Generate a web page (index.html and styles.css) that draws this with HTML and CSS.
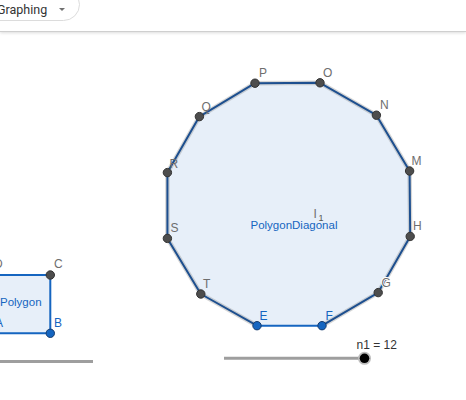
FILE: index.html
```html
<!DOCTYPE html>
<html>
<head>
<meta charset="utf-8">
<link rel="stylesheet" href="styles.css">
</head>
<body>
<div class="app">
  <header class="topbar">
    <div class="app-pill">
      <span class="app-name">Graphing</span>
      <span class="caret"></span>
    </div>
  </header>
  <svg class="canvas" width="466" height="368" viewBox="0 32 466 368">
    <!-- small polygon -->
    <rect class="poly-fill" x="-20" y="275" width="70.3" height="58.3"/>
    <polyline class="edge-bright" points="-20,275 50.3,275 50.3,333.3 -20,333.3"/>
    <circle class="pt-gray" cx="50.3" cy="275" r="4.2"/>
    <circle class="pt-blue" cx="50.3" cy="333.3" r="4.2"/>
    <text class="lbl" x="-6" y="268">D</text>
    <text class="lbl" x="54" y="268">C</text>
    <text class="lbl blue" x="-5" y="327">A</text>
    <text class="lbl blue" x="54" y="327">B</text>
    <text class="cap" x="0" y="306">Polygon</text>

    <!-- left slider -->
    <line class="slider" x1="-10" y1="361.5" x2="93" y2="361.5"/>

    <!-- regular 12-gon -->
    <polygon class="poly-fill" points="255,83.2 320,82.8 376.4,115.2 409.6,171 410.2,236.4 378.2,292.6 322,325.7 257,325.7 200.8,294 167.4,238.4 167.4,172.6 199.4,116.6"/>
    <polyline class="halo" points="257,325.7 200.8,294 167.4,238.4 167.4,172.6 199.4,116.6 255,83.2 320,82.8 376.4,115.2 409.6,171 410.2,236.4 378.2,292.6 322,325.7"/>
    <polyline class="edge-dark" points="257,325.7 200.8,294 167.4,238.4 167.4,172.6 199.4,116.6 255,83.2 320,82.8 376.4,115.2 409.6,171 410.2,236.4 378.2,292.6 322,325.7"/>
    <line class="edge-bright" x1="257" y1="325.7" x2="322" y2="325.7"/>

    <circle class="pt-gray" cx="255" cy="83.2" r="4.2"/>
    <circle class="pt-gray" cx="320" cy="82.8" r="4.2"/>
    <circle class="pt-gray" cx="376.4" cy="115.2" r="4.2"/>
    <circle class="pt-gray" cx="409.6" cy="171" r="4.2"/>
    <circle class="pt-gray" cx="410.2" cy="236.4" r="4.2"/>
    <circle class="pt-gray" cx="378.2" cy="292.6" r="4.2"/>
    <circle class="pt-blue" cx="322" cy="325.7" r="4.2"/>
    <circle class="pt-blue" cx="257" cy="325.7" r="4.2"/>
    <circle class="pt-gray" cx="200.8" cy="294" r="4.2"/>
    <circle class="pt-gray" cx="167.4" cy="238.4" r="4.2"/>
    <circle class="pt-gray" cx="167.4" cy="172.6" r="4.2"/>
    <circle class="pt-gray" cx="199.4" cy="116.6" r="4.2"/>

    <text class="lbl" x="259" y="77">P</text>
    <text class="lbl" x="323" y="77">O</text>
    <text class="lbl" x="380" y="108.5">N</text>
    <text class="lbl" x="411.5" y="164.5">M</text>
    <text class="lbl" x="413" y="229.5">H</text>
    <text class="lbl halo-text" x="381.5" y="286.5">G</text>
    <text class="lbl blue" x="325.5" y="319.5">F</text>
    <text class="lbl blue" x="259.5" y="320">E</text>
    <text class="lbl" x="203" y="287.5">T</text>
    <text class="lbl" x="170.5" y="232">S</text>
    <text class="lbl" x="169.5" y="167.5">R</text>
    <text class="lbl" x="201.5" y="110.5">Q</text>

    <text class="lbl" x="313.5" y="217.5">I</text>
    <text class="sub" x="318.5" y="221">1</text>
    <text class="cap" x="250.5" y="228.5">PolygonDiagonal</text>

    <!-- slider n1 -->
    <line class="slider" x1="224" y1="358.3" x2="364.5" y2="358.3"/>
    <circle class="slider-ring" cx="364.5" cy="358.3" r="6.5"/>
    <circle class="slider-pt" cx="364.5" cy="358.3" r="4.8"/>
    <text class="val" x="356.5" y="348.5">n1 = 12</text>
  </svg>
</div>
</body>
</html>
```
FILE: styles.css
```css
html, body {
  margin: 0;
  padding: 0;
  background: #ffffff;
  overflow: hidden;
}

.app {
  width: 466px;
  height: 400px;
  display: flex;
  flex-direction: column;
  font-family: "Liberation Sans", Arial, sans-serif;
}

.topbar {
  height: 31px;
  flex: none;
  border-bottom: 1px solid #cfcfcf;
  box-shadow: 0 1px 3px rgba(0, 0, 0, 0.14);
  background: #ffffff;
  position: relative;
  z-index: 1;
}

.app-pill {
  margin-left: -30px;
  margin-top: -12px;
  height: 33px;
  width: 110px;
  box-sizing: border-box;
  border: 1px solid #dcdcdc;
  border-radius: 17px;
  display: flex;
  align-items: flex-start;
  padding-left: 26px;
  padding-top: 14px;
  gap: 12px;
}

.app-name {
  font-family: Roboto, "Liberation Sans", sans-serif;
  font-size: 12.5px;
  line-height: 14px;
  color: #333333;
}

.caret {
  width: 0;
  height: 0;
  margin-top: 5px;
  border-left: 3px solid transparent;
  border-right: 3px solid transparent;
  border-top: 3px solid #707070;
}

.canvas {
  display: block;
  flex: none;
}

.poly-fill {
  fill: #e7eff9;
  stroke: none;
}

.halo {
  fill: none;
  stroke: rgba(120, 120, 120, 0.3);
  stroke-width: 4.5;
  stroke-linejoin: round;
}

.edge-dark {
  fill: none;
  stroke: #1d4f8f;
  stroke-width: 2;
  stroke-linejoin: round;
}

.edge-bright {
  fill: none;
  stroke: #1565c0;
  stroke-width: 2;
}

.pt-gray {
  fill: #4d4d4d;
  stroke: #333333;
  stroke-width: 1;
}

.pt-blue {
  fill: #1565c0;
  stroke: #163c6e;
  stroke-width: 1;
}

.lbl {
  font-family: "Liberation Sans", Arial, sans-serif;
  font-size: 12px;
  fill: #6e6e6e;
}

.lbl.blue {
  fill: #1565c0;
}

.halo-text {
  paint-order: stroke;
  stroke: #ffffff;
  stroke-width: 2;
}

.sub {
  font-family: "Liberation Sans", Arial, sans-serif;
  font-size: 9px;
  fill: #555555;
}

.cap {
  font-family: "Liberation Sans", Arial, sans-serif;
  font-size: 11.5px;
  fill: #1565c0;
}

.slider {
  stroke: #9e9e9e;
  stroke-width: 3;
}

.slider-ring {
  fill: #bdbdbd;
}

.slider-pt {
  fill: #000000;
}

.val {
  font-family: "Liberation Sans", Arial, sans-serif;
  font-size: 12px;
  fill: #333333;
}
```
